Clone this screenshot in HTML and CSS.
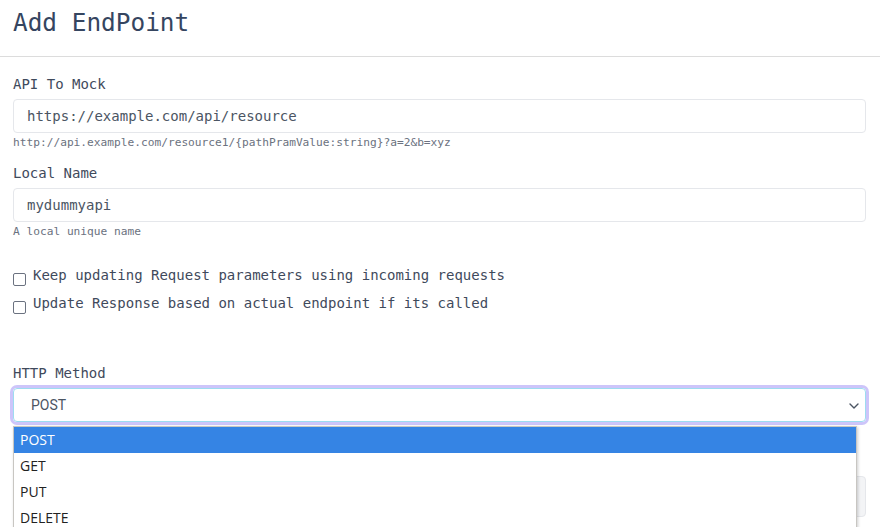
FILE: index.html
```html
<!DOCTYPE html>
<html lang="en">
<head>
<meta charset="utf-8">
<title>Add EndPoint</title>
<link rel="stylesheet" href="styles.css">
</head>
<body>
<header class="page-header">
  <h1 class="title">Add EndPoint</h1>
</header>
<form class="form">
  <div class="field">
    <label class="label">API To Mock</label>
    <div class="input">https://example.com/api/resource</div>
    <div class="help">http://api.example.com/resource1/{pathPramValue:string}?a=2&amp;b=xyz</div>
  </div>
  <div class="field field-next">
    <label class="label">Local Name</label>
    <div class="input">mydummyapi</div>
    <div class="help">A local unique name</div>
  </div>
  <div class="checks">
    <label class="check"><span class="box"></span><span>Keep updating Request parameters using incoming requests</span></label>
    <label class="check"><span class="box"></span><span>Update Response based on actual endpoint if its called</span></label>
  </div>
  <div class="field field-method">
    <label class="label">HTTP Method</label>
    <div class="select-wrap">
      <div class="select">
        <span>POST</span>
        <svg class="chev" width="10" height="6" viewBox="0 0 10 6"><path d="M1 1l4 4 4-4" fill="none" stroke="#4b5563" stroke-width="1.4" stroke-linecap="round" stroke-linejoin="round"/></svg>
      </div>
      <ul class="dropdown">
        <li class="opt opt-active">POST</li>
        <li class="opt">GET</li>
        <li class="opt">PUT</li>
        <li class="opt">DELETE</li>
      </ul>
    </div>
  </div>
  <div class="field-after">
    <div class="input input-muted"></div>
  </div>
</form>
</body>
</html>
```

FILE: styles.css
```css
* { box-sizing: border-box; }
html, body { margin: 0; padding: 0; background: #fff; }
body {
  font-family: "DejaVu Sans Mono", "Liberation Mono", monospace;
  color: #3f4a5c;
  font-size: 14px;
  overflow: hidden;
  height: 527px;
}
.page-header {
  height: 57px;
  border-bottom: 1px solid #dcdcdc;
  padding: 7px 13px 0;
}
.title {
  margin: 0;
  font-weight: 400;
  font-size: 24.4px;
  line-height: 32px;
  color: #354560;
}
.form {
  padding: 17px 14px 0 13px;
}
.field { display: flex; flex-direction: column; }
.field-next { margin-top: 12px; }
.label {
  font-size: 14px;
  line-height: 20px;
  margin-bottom: 5px;
  color: #3f4a5c;
}
.input {
  height: 34px;
  border: 1px solid #e5e7eb;
  border-radius: 4px;
  padding: 0 13px;
  line-height: 32px;
  font-size: 14px;
  color: #4b5563;
}
.help {
  font-size: 11.2px;
  line-height: 16px;
  margin-top: 2px;
  color: #6b7280;
}
.checks {
  margin-top: 21px;
  display: flex;
  flex-direction: column;
}
.check {
  display: flex;
  align-items: flex-start;
  height: 28px;
  line-height: 28px;
  color: #3f4a5c;
}
.box {
  width: 13px;
  height: 13px;
  border: 1.5px solid #6b7280;
  border-radius: 2px;
  margin-top: 12px;
  margin-right: 7px;
  flex: none;
}
.field-method { margin-top: 46px; }
.select-wrap { position: relative; }
.select {
  height: 34px;
  border: 1px solid #9ddcf0;
  border-radius: 4px;
  box-shadow: 0 0 0 3px #cdc5fa;
  padding: 0 6px 0 17px;
  display: flex;
  align-items: center;
  justify-content: space-between;
  font-family: Roboto, "Liberation Sans", sans-serif;
  font-size: 14px;
  color: #4b5563;
}
.chev { margin-top: 1px; }
.dropdown {
  position: absolute;
  left: 0;
  top: 38px;
  width: 844px;
  margin: 0;
  padding: 0;
  list-style: none;
  background: #fff;
  border: 1px solid #c8c6c2;
  border-bottom: none;
  box-shadow: 1px 1px 3px rgba(0,0,0,0.2);
  font-family: "Open Sans", "Liberation Sans", sans-serif;
  font-size: 14px;
  color: #222;
  z-index: 2;
}
.opt {
  height: 26px;
  line-height: 26px;
  padding-left: 6px;
}
.opt-active { background: #3584e4; color: #fff; }
.field-after { margin-top: 54px; }
.input-muted { background: #f3f4f6; height: 41px; }
```
